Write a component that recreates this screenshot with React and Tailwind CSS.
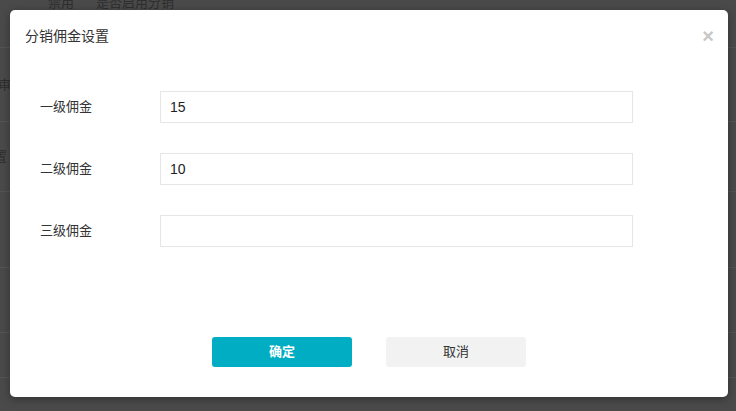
export default function App() {
  const rows = [
    { label: "一级佣金", value: "15" },
    { label: "二级佣金", value: "10" },
    { label: "三级佣金", value: "" },
  ];
  return (
    <div
      className="relative w-[736px] h-[411px] overflow-hidden bg-[#4a4a4a]"
      style={{ fontFamily: '"Liberation Sans", "Noto Sans CJK SC", sans-serif' }}
    >
      {/* faint page behind the overlay */}
      <div className="flex flex-col text-[13px] text-[#2e2e2e]">
        <div className="h-[55px] border-b border-[#545454] flex items-start gap-[22px] pl-[48px] -mt-[7px]">
          <span>禁用</span>
          <span>是否启用分销</span>
        </div>
        <div className="h-[74px] border-b border-[#545454] flex items-center -ml-[2px]">审</div>
        <div className="h-[70px] border-b border-[#545454] flex items-center -ml-[6px]">置</div>
        <div className="h-[76px] border-b border-[#545454]"></div>
        <div className="h-[65px] border-b border-[#545454] flex items-center -ml-[4px] pb-[10px]">)</div>
        <div className="h-[45px] border-b border-[#545454]"></div>
      </div>

      {/* modal */}
      <div className="absolute left-[10px] top-[10px] w-[718px] h-[387px] bg-white rounded-[5px] shadow-[0_2px_8px_rgba(0,0,0,0.35)] flex flex-col">
        <div className="flex items-center justify-between pl-[15px] pr-[14px] pt-[17px] h-[35px]">
          <span className="text-[14px] leading-[18px] text-[#333]">分销佣金设置</span>
          <span className="text-[#c8c8c8] text-[20px] leading-[18px] font-bold -mt-[1px]">×</span>
        </div>
        <div className="flex flex-col gap-[30px] pl-[30px] pt-[46px]">
          {rows.map((r) => (
            <div key={r.label} className="flex items-center">
              <div className="w-[120px] text-[13px] text-[#333]">{r.label}</div>
              <div className="w-[473px] h-[32px] border border-[#e6e6e6] flex items-center pl-[9px] text-[14px] text-[#222]">
                {r.value}
              </div>
            </div>
          ))}
        </div>
        <div className="flex gap-[34px] pl-[202px] mt-[90px]">
          <button className="w-[140px] h-[30px] rounded-[3px] bg-[#00adc2] text-white text-[13px] font-bold">
            确定
          </button>
          <button className="w-[140px] h-[30px] rounded-[3px] bg-[#f2f2f2] text-[#333] text-[13px]">
            取消
          </button>
        </div>
      </div>
    </div>
  );
}
